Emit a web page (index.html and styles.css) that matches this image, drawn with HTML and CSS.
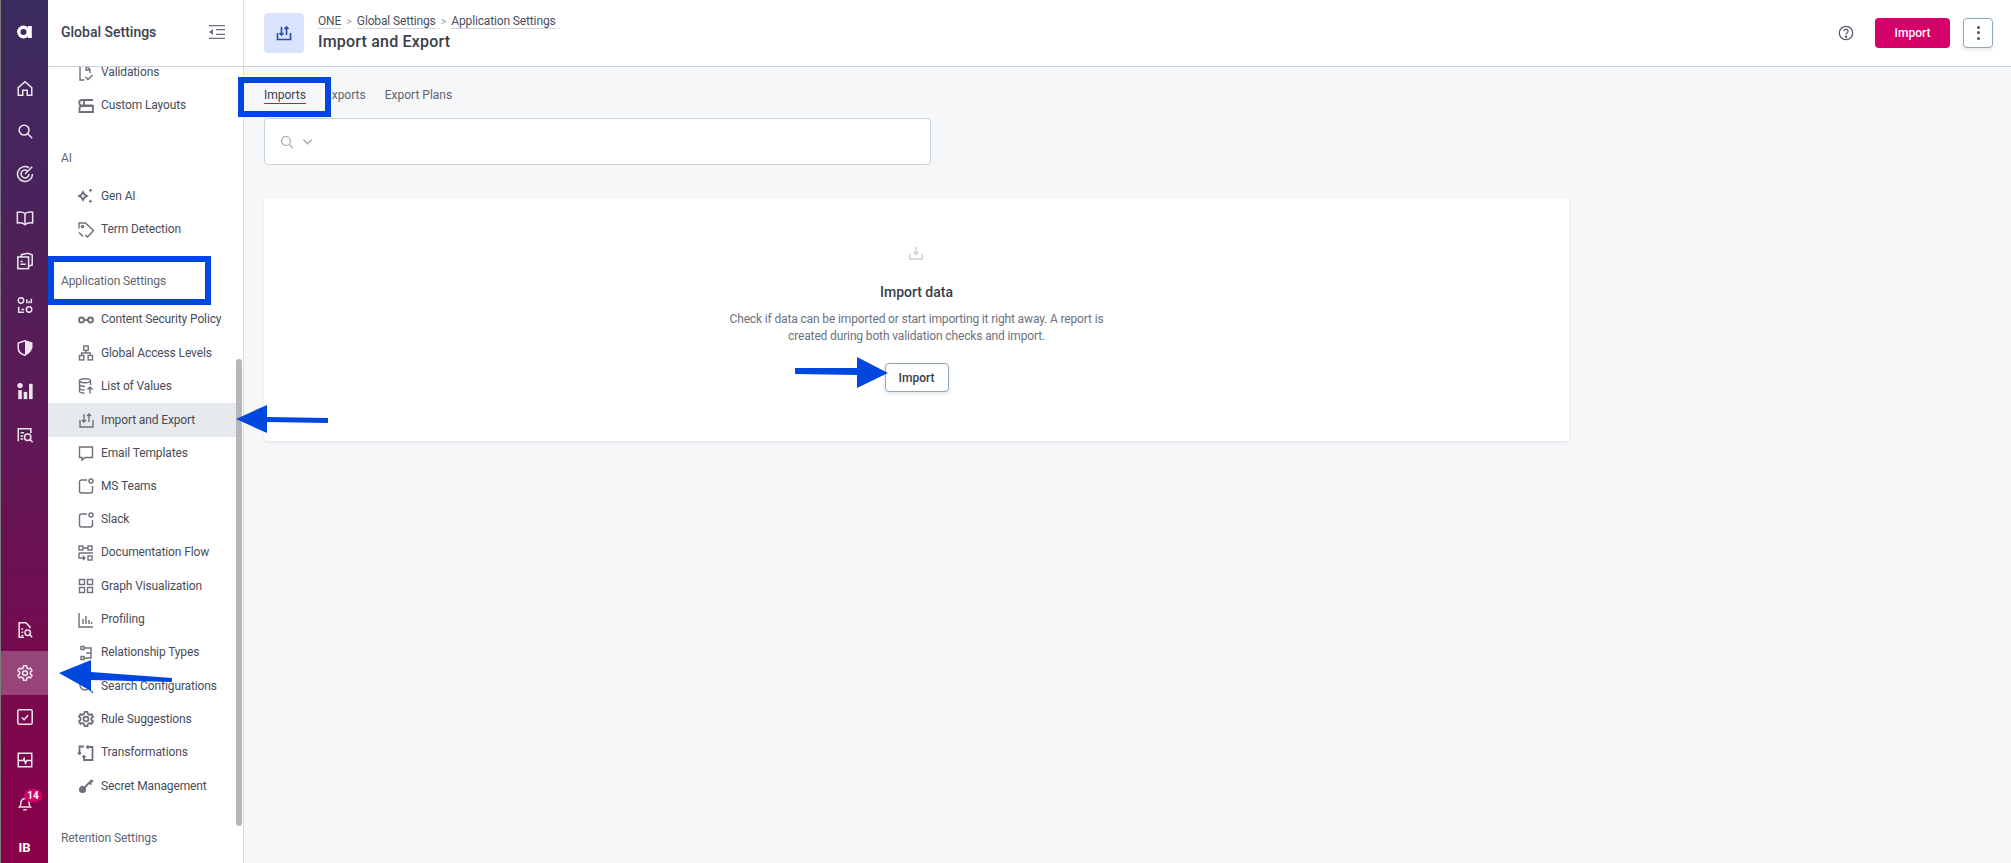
FILE: index.html
```html
<!DOCTYPE html>
<html lang="en">
<head>
<meta charset="utf-8">
<title>Import and Export</title>
<link rel="stylesheet" href="styles.css">
</head>
<body>
<div class="app">
  <aside class="rail">
    <div class="rail-group">
      <div class="rail-logo"><svg class="ri" viewBox="0 0 20 20"><circle cx="8.500" cy="10" r="4.700" fill="none" stroke="#fff" stroke-width="3.400"/><rect x="12.800" y="4" width="4" height="12" fill="#fff"/></svg></div>
      <div class="rail-item"><svg class="ri" viewBox="0 0 20 20"><path d="M2.500 9.500L10 3l7.500 6.500V18H12.500v-5.500h-5V18h-5z"/></svg></div>
      <div class="rail-item"><svg class="ri" viewBox="0 0 20 20"><circle cx="9" cy="9" r="5.500"/><path d="M13 13l5 5"/></svg></div>
      <div class="rail-item"><svg class="ri" viewBox="0 0 20 20"><path d="M14.500 3A8.300 8.300 0 1 0 18.300 10"/><path d="M12.500 6.300A4.400 4.400 0 1 0 14.400 10"/><path d="M10 10l8-8"/></svg></div>
      <div class="rail-item"><svg class="ri" viewBox="0 0 20 20"><path d="M10 5C8 3.500 5 3 1.500 3.500V15.500C5 15 8 15.500 10 17.500C12 15.500 15 15 18.500 15.500V3.500C15 3 12 3.500 10 5Z"/><path d="M10 5v12.500"/></svg></div>
      <div class="rail-item"><svg class="ri" viewBox="0 0 20 20"><path d="M6 5.500V3l7-1.500 5 1.500v11.500l-4 1"/><rect x="2" y="5.500" width="12" height="13"/><path d="M5 13.500h6M5 10.500h2.500"/></svg></div>
      <div class="rail-item"><svg class="ri" viewBox="0 0 20 20"><circle cx="5.500" cy="5" r="3"/><circle cx="14.500" cy="15" r="3"/><path d="M12 8V3.500M14.500 8V5.500M17 8V3M3 12v6h6M6 15h3"/></svg></div>
      <div class="rail-item"><svg class="ri" viewBox="0 0 20 20"><path class="half" d="M10 2l7.500 2.500V10c0 4-3.500 7-7.500 8z"/><path d="M10 2L2.500 4.500V10c0 4 3.500 7 7.500 8l7.500-8V4.500z"/></svg></div>
      <div class="rail-item"><svg class="ri solid" viewBox="0 0 20 20"><circle cx="4.500" cy="4" r="3"/><rect x="2.500" y="9" width="4" height="10"/><rect x="8.500" y="11" width="4" height="8"/><rect x="14.500" y="2" width="4" height="17"/></svg></div>
      <div class="rail-item"><svg class="ri" viewBox="0 0 20 20"><path d="M2.500 17V3h14v5"/><path d="M5 7.500h4M5 11h3M5 14.500h3"/><circle cx="13" cy="12.500" r="3.500"/><path d="M15.500 15l3 3"/></svg></div>
    </div>
    <div class="rail-group">
      <div class="rail-item"><svg class="ri" viewBox="0 0 20 20"><path d="M9 18H3.500V2H11l4.500 4.500V8"/><path d="M6 9h2M6 12.500h2M6 16h2"/><circle cx="13" cy="13" r="3"/><path d="M15.200 15.200L18 18"/></svg></div>
      <div class="rail-item rail-active"><svg class="ri" viewBox="0 0 20 20"><circle cx="10" cy="10" r="2.600"/><path d="M8.400 2h3.200l.5 2.400 1.800 1 2.300-.8 1.600 2.800-1.800 1.600v2l1.800 1.600-1.600 2.800-2.300-.8-1.800 1-.5 2.400H8.400l-.5-2.400-1.800-1-2.300.8-1.600-2.800 1.800-1.600v-2L2.200 7.400l1.600-2.800 2.300.8 1.800-1z"/></svg></div>
      <div class="rail-item"><svg class="ri" viewBox="0 0 20 20"><rect x="2" y="2" width="16" height="16" rx="1.500"/><path d="M6.500 10.500l2.500 2.500 4.500-5"/></svg></div>
      <div class="rail-item"><svg class="ri" viewBox="0 0 20 20"><rect x="2.500" y="2.500" width="15" height="15"/><path d="M2.500 10.500H8l1-2 1.500 5 1.500-3h5.500"/></svg></div>
      <div class="rail-item rail-bell">
        <svg class="ri" viewBox="0 0 20 20"><path d="M4 14.500c1.500-1.500 1.500-3 1.500-5a4.500 4.500 0 0 1 9 0c0 2 0 3.500 1.500 5zM8 17.500h4"/></svg>
        <span class="badge">14</span>
      </div>
      <div class="rail-user">IB</div>
    </div>
  </aside>

  <nav class="panel">
    <div class="panel-head">
      <span class="panel-title">Global Settings</span>
      <svg class="collapse" viewBox="0 0 16 14"><path d="M0 .7h16M7 4.700h9M7 9.300h9M0 13.300h16"/><path class="solid-tri" d="M4 4v6L0 7z"/></svg>
    </div>
    <div class="panel-scroll">
      <div class="panel-inner">
        <a class="row"><svg class="ni" viewBox="0 0 18 18"><path d="M7.500 16H3V2h6.500L13 5.500V9"/><path d="M9 2v4h4"/><path d="M8.500 13l2.500 2.500 4.500-4.500"/></svg>Validations</a>
        <a class="row"><svg class="ni thick" viewBox="0 0 18 18"><path d="M16 3H5a2.500 2.500 0 0 0 0 5.500h11"/><path d="M16 9H5a2.500 2.500 0 0 0-2.500 2.500V15H16z"/><path d="M7 3v5.500"/></svg>Custom Layouts</a>

        <div class="sec">AI</div>
        <a class="row"><svg class="ni thick" viewBox="0 0 18 18"><path d="M6 5l1.500 2.500L10 9l-2.500 1.500L6 13l-1.500-2.500L2 9l2.500-1.500z"/><path class="nf" d="M13.500 1c.3 1.400.9 2 2.300 2.300-1.400.3-2 .9-2.300 2.300-.3-1.400-.9-2-2.300-2.300 1.400-.3 2-.9 2.300-2.300zM13.500 12c.3 1.400.9 2 2.300 2.300-1.400.3-2 .9-2.300 2.300-.3-1.400-.9-2-2.300-2.300 1.400-.3 2-.9 2.300-2.300z"/></svg>Gen AI</a>
        <a class="row"><svg class="ni" viewBox="0 0 18 18"><path d="M2 7.500V2h6.500l8 7.500-6 6.500-2.500-2"/><circle cx="5.500" cy="5.500" r="1.100"/><path d="M2 11.500l4 4"/></svg>Term Detection</a>

        <div class="sec">Application Settings</div>
        <a class="row"><svg class="ni thick" viewBox="0 0 18 18"><circle cx="4.500" cy="9" r="2.500"/><circle cx="13.500" cy="9" r="2.500"/><path d="M7 9h4"/></svg>Content Security Policy</a>
        <a class="row"><svg class="ni" viewBox="0 0 18 18"><rect x="6.800" y="2" width="4.400" height="4.400"/><rect x="2.500" y="11.500" width="4.400" height="4.400"/><rect x="11.100" y="11.500" width="4.400" height="4.400"/><path d="M9 6.400v2.600M4.700 11.500V9h8.600v2.500"/></svg>Global Access Levels</a>
        <a class="row"><svg class="ni" viewBox="0 0 18 18"><ellipse cx="8" cy="3.800" rx="5.500" ry="2"/><path d="M2.500 3.800v10.500c0 1 2 1.800 5 1.900M13.500 3.800V8M2.500 7.500c0 1 2.500 2 5.500 2M2.500 11c0 1 2.200 1.900 5 2"/><path d="M13 16.500V10M10.500 12.500L13 10l2.500 2.500"/></svg>List of Values</a>
        <a class="row row-active"><svg class="ni" viewBox="0 0 18 18"><path d="M3 9v7h13V9"/><path d="M7 3v8M5 9l2 2 2-2M12 11V3M10 5l2-2 2 2"/></svg>Import and Export</a>
        <a class="row"><svg class="ni" viewBox="0 0 18 18"><path d="M2.500 3h13v10.500H8l-3 2.500v-2.500H2.500z"/></svg>Email Templates</a>
        <a class="row"><svg class="ni" viewBox="0 0 18 18"><path d="M10 3H4.500A2 2 0 0 0 2.500 5v9a2 2 0 0 0 2 2h9a2 2 0 0 0 2-2V9"/><circle cx="14" cy="4" r="2"/></svg>MS Teams</a>
        <a class="row"><svg class="ni" viewBox="0 0 18 18"><path d="M10 3H4.500A2 2 0 0 0 2.500 5v9a2 2 0 0 0 2 2h9a2 2 0 0 0 2-2V9"/><circle cx="14" cy="4" r="2"/></svg>Slack</a>
        <a class="row"><svg class="ni" viewBox="0 0 18 18"><rect x="2" y="2" width="4" height="4"/><rect x="11" y="2" width="4" height="4"/><rect x="11" y="12" width="4" height="4"/><path d="M2 9h14M2 9v5h6M6 12l2 2-2 2M6 4h5"/></svg>Documentation Flow</a>
        <a class="row"><svg class="ni" viewBox="0 0 18 18"><rect x="2.500" y="2.500" width="5" height="5"/><rect x="10.500" y="2.500" width="5" height="5"/><rect x="2.500" y="10.500" width="5" height="5"/><rect x="10.500" y="10.500" width="5" height="5"/></svg>Graph Visualization</a>
        <a class="row"><svg class="ni" viewBox="0 0 18 18"><path d="M2 2v14h14M6 13V8M9 13V5M12 13V9M14.500 13v-2"/></svg>Profiling</a>
        <a class="row"><svg class="ni" viewBox="0 0 18 18"><rect x="4" y="2.500" width="3" height="3"/><rect x="4" y="12.500" width="3" height="3"/><path d="M7 4h7v5H9M7 14h7v-5"/></svg>Relationship Types</a>
        <a class="row"><svg class="ni" viewBox="0 0 18 18"><circle cx="8" cy="8" r="5"/><path d="M12 12l4 4"/></svg>Search Configurations</a>
        <a class="row"><svg class="ni thick" viewBox="0 0 18 18"><circle cx="9" cy="9" r="2.400"/><path d="M7.600 1.800h2.800l.5 2.200 1.600.9 2.100-.7 1.400 2.500-1.600 1.400v1.800l1.600 1.400-1.400 2.500-2.100-.7-1.600.9-.5 2.200H7.600l-.5-2.200-1.600-.9-2.100.7-1.400-2.500L3.600 9.900V8.100L2 6.700l1.400-2.500 2.100.7 1.600-.9z"/></svg>Rule Suggestions</a>
        <a class="row"><svg class="ni thick" viewBox="0 0 18 18"><path d="M7 2.500H2.500V10M1 8.500l1.500 1.500L4 8.500"/><path d="M10 3h5.500v13H7v-4"/><path d="M5.500 13.500L7 12l1.500 1.500"/><path d="M11.500 1.500L10 3l1.500 1.500"/></svg>Transformations</a>
        <a class="row"><svg class="ni" viewBox="0 0 18 18"><circle class="nf" cx="5.500" cy="12.500" r="3.500"/><path class="wide" d="M7 11l8-8M12.500 5.500l2 2M14.500 3.500l1.500 1.500"/></svg>Secret Management</a>

        <div class="sec">Retention Settings</div>
      </div>
      <div class="scrollbar"></div>
    </div>
  </nav>

  <div class="main">
    <header class="top">
      <div class="top-icon"><svg class="ti" viewBox="0 0 18 18"><path d="M2.500 9v6.500h13V9"/><path d="M6.500 3v8M4.500 9l2 2 2-2M11.500 11V3M9.500 5l2-2 2 2"/></svg></div>
      <div class="top-text">
        <div class="crumbs"><a>ONE</a><span class="sep">&gt;</span><a>Global Settings</a><span class="sep">&gt;</span><a>Application Settings</a></div>
        <h1>Import and Export</h1>
      </div>
      <div class="top-actions">
        <svg class="help" viewBox="0 0 16 16"><circle cx="8" cy="8" r="6.700"/><path d="M6 6.300a2 2 0 1 1 3 1.700c-.7.400-1 .8-1 1.500"/><circle class="dot" cx="8" cy="11.700" r=".6"/></svg>
        <button class="btn-primary">Import</button>
        <button class="btn-more"><span></span><span></span><span></span></button>
      </div>
    </header>
    <div class="content">
      <div class="tabs">
        <a class="tab tab-active">Imports</a>
        <a class="tab">Exports</a>
        <a class="tab">Export Plans</a>
      </div>
      <div class="search">
        <svg class="s-ic" viewBox="0 0 14 14"><circle cx="6" cy="6" r="4.500"/><path d="M9.300 9.300L13 13"/></svg>
        <svg class="s-ch" viewBox="0 0 12 8"><path d="M1.500 1.500L6 6l4.500-4.500"/></svg>
      </div>
      <section class="card">
        <svg class="card-ic" viewBox="0 0 14 14"><path d="M1 8v5h12V8"/><path d="M7 1v7.500M4.500 6L7 8.500 9.500 6"/></svg>
        <h2>Import data</h2>
        <p>Check if data can be imported or start importing it right away. A report is<br>created during both validation checks and import.</p>
        <button class="btn-second">Import</button>
      </section>
    </div>
  </div>
</div>

<svg class="marks" viewBox="0 0 2011 863">
  <rect x="241" y="80" width="87" height="34"/>
  <rect x="51" y="259" width="157" height="43"/>
  <path class="fill" d="M236 419L267 405V417L328 418V423L267 422V433Z"/>
  <path class="fill" d="M59 673L91 660V672L172 678V682L91 680V691Z"/>
  <path class="fill" d="M888 373L857 357V368L795 368V374L857 375V388Z"/>
</svg>
</body>
</html>
```
FILE: styles.css
```css
* { box-sizing: border-box; }
html, body { margin: 0; height: 100%; overflow: hidden; }
body { font-family: Roboto, "Liberation Sans", sans-serif; font-size: 12px; color: #3c4150; background: #fff; }
.app { display: flex; height: 863px; width: 2011px; }

/* icon rail */
.rail { width: 48px; flex: none; border-left: 1px solid #7b7b7b; background: linear-gradient(180deg, #3a2c60 0%, #5a1a57 45%, #8a0049 100%); display: flex; flex-direction: column; justify-content: space-between; overflow: hidden; }
.rail-logo { height: 66px; padding-bottom: 2px; display: flex; align-items: center; justify-content: center; }
.rail-item { height: 43.4px; display: flex; align-items: center; justify-content: center; position: relative; }
.rail-active { background: rgba(255,255,255,.24); }
.ri { width: 18px; height: 18px; fill: none; stroke: #ebe4ec; stroke-width: 1.700; }
.ri.solid { fill: #ebe4ec; stroke: none; }
.half { fill: #ebe4ec; stroke: none; }
.rail-logo .ri { width: 20px; height: 20px; stroke: none; }
.badge { position: absolute; left: 23px; top: 7px; height: 13px; min-width: 18px; border-radius: 7px; background: #d50068; color: #fff; font-size: 10px; font-weight: 700; line-height: 13px; text-align: center; }
.rail-user { height: 38px; padding-top: 9px; text-align: center; color: #fff; font-size: 13px; font-weight: 700; line-height: 28px; }

/* settings panel */
.panel { width: 196px; flex: none; border-right: 1px solid #d5dce2; display: flex; flex-direction: column; background: #fff; overflow: hidden; }
.panel-head { height: 67px; flex: none; position: relative; z-index: 1; background: #fff; border-bottom: 1px solid #c9d3db; display: flex; align-items: center; justify-content: space-between; padding: 0 18px 2px 13px; }
.panel-title { font-size: 14px; font-weight: 500; color: #3c4150; }
.collapse { width: 16px; height: 14px; fill: none; stroke: #6b7078; stroke-width: 1.300; }
.solid-tri { fill: #6b7078; stroke: none; }
.panel-scroll { flex: 1; position: relative; }
.panel-inner { margin-top: -11px; }
.row { display: flex; align-items: center; gap: 6px; height: 33.3px; padding-left: 29px; color: #474c5a; white-space: nowrap; letter-spacing: -.12px; line-height: 11px; }
.row-active { background: #e6eaec; margin-right: 7px; height: 34px; margin-bottom: -.7px; }
.ni { width: 18px; height: 18px; flex: none; fill: none; stroke: #6d7079; stroke-width: 1.400; }
.ni.thick { stroke-width: 1.800; }
.nf { fill: #6d7079; stroke: none; }
.wide { stroke-width: 1.800; }
.sec { height: 20px; line-height: 20px; margin: 25px 0 12px; padding-left: 13px; color: #5f6472; white-space: nowrap; letter-spacing: -.1px; }
.scrollbar { position: absolute; right: 1px; top: 292px; width: 6px; height: 467px; border-radius: 3px; background: #b5b7bb; }

/* main */
.main { flex: 1; min-width: 0; display: flex; flex-direction: column; background: #f6f7f9; }
.top { height: 67px; flex: none; background: #fff; border-bottom: 1px solid #c9d3db; display: flex; align-items: center; padding: 0 18px 1px 20px; }
.top-icon { width: 40px; height: 40px; border-radius: 4px; background: #d9e3fb; display: flex; align-items: center; justify-content: center; }
.ti { width: 18px; height: 18px; fill: none; stroke: #2b4fb0; stroke-width: 1.700; }
.top-text { margin-left: 14px; }
.crumbs { display: flex; gap: 5px; align-items: center; line-height: 16px; color: #4a4f5c; letter-spacing: -.14px; margin-top: 1px; }
.crumbs a { border-bottom: 1px solid #cfd3d8; line-height: 14px; }
.sep { color: #9a9ea6; font-size: 11px; }
h1 { margin: 1px 0 0; font-size: 16px; font-weight: 500; line-height: 22px; color: #3a3e4a; letter-spacing: .2px; }
.top-actions { margin-left: auto; display: flex; align-items: center; }
.help { width: 16px; height: 16px; fill: none; stroke: #5b5f68; stroke-width: 1.300; margin-right: 21px; }
.dot { fill: #5b5f68; }
.btn-primary { width: 75px; height: 30px; border: 0; border-radius: 4px; background: #d50068; color: #fff; font: 500 12px Roboto, sans-serif; }
.btn-more { width: 30px; height: 30px; margin-left: 13px; background: #fff; border: 1px solid #8fa6b8; border-radius: 4px; box-shadow: 0 2px 4px rgba(60,80,100,.12); display: flex; flex-direction: column; align-items: center; justify-content: center; gap: 2.500px; padding: 0; }
.btn-more span { width: 3px; height: 3px; border-radius: 50%; background: #50555f; }
.content { padding: 0 20px; }
.tabs { display: flex; gap: 19px; height: 51px; padding-top: 20px; color: #5f6472; }
.tab { height: 17px; line-height: 16px; }
.tab-active { color: #3c4150; border-bottom: 1px solid #c2185b; }
.search { width: 667px; height: 47px; background: #fff; border: 1px solid #c9d3db; border-radius: 4px; display: flex; align-items: center; padding-left: 15px; gap: 8px; }
.s-ic { width: 14px; height: 14px; fill: none; stroke: #a4a8ae; stroke-width: 1.200; }
.s-ch { width: 11px; height: 8px; fill: none; stroke: #a4a8ae; stroke-width: 1.500; }
.card { margin-top: 33px; width: 1305px; height: 243px; background: #fff; border-radius: 4px; box-shadow: 0 1px 3px rgba(50,70,90,.10); display: flex; flex-direction: column; align-items: center; padding-top: 48px; }
.card-ic { width: 14px; height: 14px; margin-right: 1px; fill: none; stroke: #d8dadc; stroke-width: 1.900; }
h2 { margin: 22px 0 0; font-size: 14px; font-weight: 500; line-height: 20px; color: #3a3e4a; }
.card p { margin: 9px 0 0; text-align: center; line-height: 17px; color: #6d7280; letter-spacing: -.14px; }
.btn-second { margin-top: 18px; width: 64px; height: 29px; background: #fff; border: 1px solid #8fa6b8; border-radius: 4px; box-shadow: 0 2px 4px rgba(60,80,100,.14); color: #3a3e4a; font: 500 12px Roboto, sans-serif; padding: 0; }

/* blue annotation overlay */
.marks { position: absolute; left: 0; top: 0; width: 2011px; height: 863px; pointer-events: none; }
.marks rect { fill: none; stroke: #0047e0; stroke-width: 6; }
.marks .fill { fill: #0047e0; }
```
